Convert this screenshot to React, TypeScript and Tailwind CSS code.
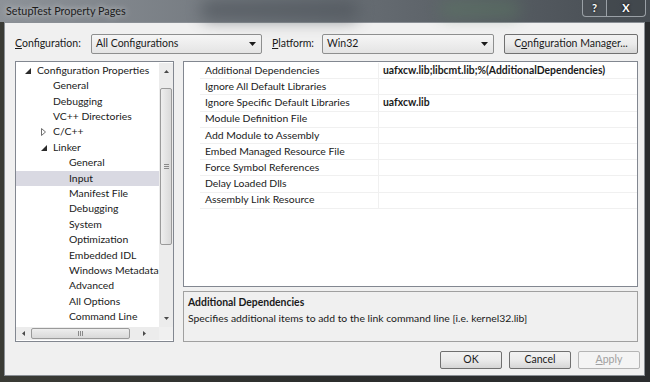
import React from 'react'

const ui = "font-['Lato','Noto_Sans',sans-serif]"

type TreeItem = { label: string; level: 0 | 1 | 2; icon?: 'open' | 'closed'; selected?: boolean }

const treeItems: TreeItem[] = [
  { label: 'Configuration Properties', level: 0, icon: 'open' },
  { label: 'General', level: 1 },
  { label: 'Debugging', level: 1 },
  { label: 'VC++ Directories', level: 1 },
  { label: 'C/C++', level: 1, icon: 'closed' },
  { label: 'Linker', level: 1, icon: 'open' },
  { label: 'General', level: 2 },
  { label: 'Input', level: 2, selected: true },
  { label: 'Manifest File', level: 2 },
  { label: 'Debugging', level: 2 },
  { label: 'System', level: 2 },
  { label: 'Optimization', level: 2 },
  { label: 'Embedded IDL', level: 2 },
  { label: 'Windows Metadata', level: 2 },
  { label: 'Advanced', level: 2 },
  { label: 'All Options', level: 2 },
  { label: 'Command Line', level: 2 },
]

const indent = ['pl-[9px]', 'pl-[25px]', 'pl-[41px]']

const props: [string, string][] = [
  ['Additional Dependencies', 'uafxcw.lib;libcmt.lib;%(AdditionalDependencies)'],
  ['Ignore All Default Libraries', ''],
  ['Ignore Specific Default Libraries', 'uafxcw.lib'],
  ['Module Definition File', ''],
  ['Add Module to Assembly', ''],
  ['Embed Managed Resource File', ''],
  ['Force Symbol References', ''],
  ['Delay Loaded Dlls', ''],
  ['Assembly Link Resource', ''],
]

const DropArrow = () => (
  <svg width="7" height="4" viewBox="0 0 7 4">
    <polygon points="0,0 7,0 3.5,4" fill="#1a1a1a" />
  </svg>
)

const Combo = ({ value, width }: { value: string; width: string }) => (
  <div
    className={`${width} h-full flex items-center justify-between pl-[4px] pr-[5px] rounded-[2px] border border-[#8e8f8f] bg-linear-to-b from-[#f6f6f6] to-[#e4e4e4] text-[10.5px] text-[#1a1a1a]`}
  >
    <span>{value}</span>
    <DropArrow />
  </div>
)

const Button = ({ children, width, disabled }: { children: React.ReactNode; width: string; disabled?: boolean }) => (
  <div
    className={`${width} h-full flex items-center justify-center rounded-[2px] border text-[10.5px] ${
      disabled
        ? 'border-[#b5b5b5] bg-[#f4f4f4] text-[#a0a0a0]'
        : 'border-[#707070] bg-linear-to-b from-[#f2f2f2] via-[#ebebeb] to-[#d6d6d6] text-[#1a1a1a]'
    }`}
  >
    {children}
  </div>
)

export default function App() {
  return (
    <div
      className={`${ui} w-[650px] h-[382px] flex flex-col overflow-hidden bg-linear-to-r from-[#3a3b35] via-[#2c2e2d] to-[#2a2c2e]`}
    >
      {/* Aero title bar */}
      <div className="relative h-[22px] shrink-0 bg-linear-to-r from-[#8d9298] via-[#6a7076] to-[#464c52]">
        <div className="absolute left-[200px] top-0 w-[160px] h-[20px] rounded-full bg-[#4f555c] blur-[8px] opacity-70" />
        <div className="absolute left-[440px] top-[2px] w-[80px] h-[14px] rounded-full bg-[#5b7a62] blur-[8px] opacity-60" />
        <span className="absolute left-[6px] top-[4px] text-[10.8px] leading-[14px] text-[#1c1c1c] [text-shadow:0_0_6px_rgba(255,255,255,0.8)]">
          SetupTest Property Pages
        </span>
        <div className="absolute right-[4px] top-0 flex h-[17px]">
          <div className="w-[25px] flex items-center justify-center rounded-bl-[4px] border border-t-0 border-[#9aa0a6] bg-[#4a5056]/70 text-[11px] font-bold text-white [text-shadow:0_0_3px_#000]">
            ?
          </div>
          <div className="w-[39px] flex items-center justify-center rounded-br-[4px] border border-t-0 border-l-0 border-[#9aa0a6] bg-[#40464c]/70 text-[11px] font-bold text-white [text-shadow:0_0_3px_#000]">
            X
          </div>
        </div>
      </div>

      {/* Client area */}
      <div className="ml-[4px] mr-[5px] mb-[6px] flex-1 flex flex-col bg-[#f0f0f0] border border-[#8a8f95] text-[#1a1a1a]">
        {/* Configuration row */}
        <div className="mt-[11px] h-[20px] flex items-center">
          <span className="ml-[10px] w-[76px] text-[10.5px] whitespace-nowrap">
            <span className="underline">C</span>onfiguration:
          </span>
          <div className="h-full">
            <Combo value="All Configurations" width="w-[171px]" />
          </div>
          <span className="ml-[10px] w-[50px] text-[10.5px] whitespace-nowrap">
            <span className="underline">P</span>latform:
          </span>
          <div className="h-full">
            <Combo value="Win32" width="w-[172px]" />
          </div>
          <div className="ml-[10px] h-full">
            <Button width="w-[134px]">
              C<span className="underline">o</span>nfiguration Manager...
            </Button>
          </div>
        </div>

        {/* Panels */}
        <div className="mt-[7px] h-[281px] flex pl-[10px] pr-[6px] gap-[9px]">
          {/* Tree */}
          <div className="w-[159px] h-full flex flex-col border border-[#828790] bg-white">
            <div className="flex-1 flex pt-[1px] min-h-0">
              <div className="flex-1 flex flex-col overflow-hidden">
                {treeItems.map((item, i) => (
                  <div
                    key={i}
                    className={`h-[15.4px] shrink-0 flex items-center whitespace-nowrap text-[10.4px] ${indent[item.level]} ${
                      item.selected ? 'bg-[#d9d9e2]' : ''
                    }`}
                  >
                    <span className="w-[12px] shrink-0 flex items-center">
                      {item.icon === 'open' && (
                        <svg width="6" height="6" viewBox="0 0 6 6">
                          <polygon points="6,0 6,6 0,6" fill="#2b2b2b" />
                        </svg>
                      )}
                      {item.icon === 'closed' && (
                        <svg width="5" height="8" viewBox="0 0 5 8">
                          <polygon points="0.5,0.5 4.5,4 0.5,7.5" fill="none" stroke="#6e6e6e" strokeWidth="1" />
                        </svg>
                      )}
                    </span>
                    <span>{item.label}</span>
                  </div>
                ))}
              </div>
              {/* Vertical scrollbar */}
              <div className="w-[14px] shrink-0 flex flex-col items-stretch bg-[#ececec]">
                <div className="h-[17px] flex items-center justify-center">
                  <svg width="5" height="3" viewBox="0 0 5 3">
                    <polygon points="0,3 5,3 2.5,0" fill="#4a4a4a" />
                  </svg>
                </div>
                <div className="mt-[8px] h-[157px] mx-[1px] flex items-center justify-center rounded-[2px] border border-[#9a9a9a] bg-linear-to-r from-[#eeeeee] to-[#d9d9d9]">
                  <div className="flex flex-col gap-[1px]">
                    <div className="w-[5px] h-px bg-[#8a8a8a]" />
                    <div className="w-[5px] h-px bg-[#8a8a8a]" />
                    <div className="w-[5px] h-px bg-[#8a8a8a]" />
                  </div>
                </div>
                <div className="flex-1" />
                <div className="h-[17px] flex items-center justify-center">
                  <svg width="5" height="3" viewBox="0 0 5 3">
                    <polygon points="0,0 5,0 2.5,3" fill="#4a4a4a" />
                  </svg>
                </div>
              </div>
            </div>
            {/* Horizontal scrollbar */}
            <div className="h-[13px] mb-[1px] shrink-0 flex">
              <div className="flex-1 flex items-center bg-[#ececec]">
                <div className="w-[15px] flex items-center justify-center">
                  <svg width="3" height="5" viewBox="0 0 3 5">
                    <polygon points="3,0 3,5 0,2.5" fill="#4a4a4a" />
                  </svg>
                </div>
                <div className="w-[99px] h-[11px] flex items-center justify-center gap-[1px] rounded-[2px] border border-[#9a9a9a] bg-linear-to-b from-[#eeeeee] to-[#d9d9d9]">
                  <div className="w-px h-[5px] bg-[#8a8a8a]" />
                  <div className="w-px h-[5px] bg-[#8a8a8a]" />
                  <div className="w-px h-[5px] bg-[#8a8a8a]" />
                </div>
                <div className="flex-1 flex items-center justify-center">
                  <svg width="3" height="5" viewBox="0 0 3 5">
                    <polygon points="0,0 0,5 3,2.5" fill="#4a4a4a" />
                  </svg>
                </div>
              </div>
              <div className="w-[14px] bg-[#f0f0f0]" />
            </div>
          </div>

          {/* Right column */}
          <div className="flex-1 flex flex-col gap-[4px]">
            <div className="h-[226px] border border-[#828790] bg-white pt-[1px]">
              {props.map(([name, value], i) => (
                <div key={i} className="h-[16.2px] flex text-[10.4px]">
                  <div className="w-[16px] shrink-0" />
                  <div className="w-[178px] shrink-0 pl-[5px] flex items-center border-b border-[#f0f0f0] whitespace-nowrap">
                    {name}
                  </div>
                  <div className="flex-1 pl-[4px] flex items-center border-b border-l border-[#f0f0f0] font-bold whitespace-nowrap">
                    {value}
                  </div>
                </div>
              ))}
            </div>
            <div className="flex-1 border border-[#a0a0a0] bg-[#f0f0f0] pl-[4px] pt-[2px] text-[10.4px] leading-[16px]">
              <div className="font-bold">Additional Dependencies</div>
              <div>Specifies additional items to add to the link command line [i.e. kernel32.lib]</div>
            </div>
          </div>
        </div>

        {/* Buttons */}
        <div className="mt-[9px] h-[18px] flex justify-end gap-[7px] pr-[4px]">
          <Button width="w-[62px]">OK</Button>
          <Button width="w-[62px]">Cancel</Button>
          <Button width="w-[62px]" disabled>
            <span className="underline">A</span>pply
          </Button>
        </div>
      </div>
    </div>
  )
}
